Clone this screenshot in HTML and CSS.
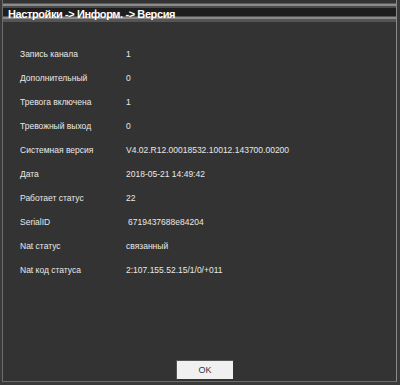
FILE: index.html
```html
<!DOCTYPE html>
<html>
<head>
<meta charset="utf-8">
<link rel="stylesheet" href="styles.css">
</head>
<body>
<div class="window">
  <div class="titlebar"><span class="title">Настройки -&gt; Информ. -&gt; Версия</span></div>
  <div class="content">
    <div class="rows">
      <div class="label">Запись канала</div><div class="value">1</div>
      <div class="label">Дополнительный</div><div class="value">0</div>
      <div class="label">Тревога включена</div><div class="value">1</div>
      <div class="label">Тревожный выход</div><div class="value">0</div>
      <div class="label">Системная версия</div><div class="value">V4.02.R12.00018532.10012.143700.00200</div>
      <div class="label">Дата</div><div class="value">2018-05-21 14:49:42</div>
      <div class="label">Работает статус</div><div class="value">22</div>
      <div class="label">SerialID</div><div class="value serial">6719437688e84204</div>
      <div class="label">Nat статус</div><div class="value">связанный</div>
      <div class="label">Nat код статуса</div><div class="value">2:107.155.52.15/1/0/+011</div>
    </div>
    <div class="footer"><button class="ok">OK</button></div>
  </div>
</div>
</body>
</html>
```
FILE: styles.css
```css
html, body {
  margin: 0;
  padding: 0;
  background: #3a3a3a;
  width: 400px;
  height: 385px;
  overflow: hidden;
}
.window {
  position: relative;
  width: 395px;
  height: 382px;
  box-sizing: border-box;
  margin-left: 2px;
  border-left: 1px solid #6c6c6c;
  border-right: 1px solid #8a8a8a;
  border-bottom: 1px solid #6c6c6c;
  background: #333333;
  display: flex;
  flex-direction: column;
}
.titlebar {
  margin-top: 3px;
  height: 19px;
  background: linear-gradient(to bottom,
    #5c5c5c 0px, #5c5c5c 1px,
    #8c8c8c 1px, #8c8c8c 3px,
    #4a4a4a 3px, #4a4a4a 5px,
    #1e1e1e 5px, #1e1e1e 13px,
    #555555 13px, #555555 14px,
    #8a8a8a 14px, #8a8a8a 16px,
    #555555 16px, #555555 19px);
  display: flex;
  align-items: center;
  padding-left: 5px;
}
.title {
  font-family: "Liberation Sans", sans-serif;
  font-weight: bold;
  font-size: 11px;
  letter-spacing: -0.4px;
  color: #ffffff;
  position: relative;
  top: 1px;
}
.content {
  flex: 1;
  display: flex;
  flex-direction: column;
  padding-left: 17px;
}
.rows {
  display: grid;
  grid-template-columns: 106px 1fr;
  grid-auto-rows: 24px;
  align-items: center;
  margin-top: 20px;
  font-family: "Liberation Sans", sans-serif;
  font-size: 8.5px;
  color: #e8e8e8;
}
.value.serial {
  padding-left: 2px;
}
.footer {
  margin-top: auto;
  display: flex;
  justify-content: center;
  padding-right: 6px;
  padding-bottom: 1px;
}
.ok {
  width: 58px;
  height: 20px;
  background: #f0f0f0;
  border: 1px solid #555;
  border-right-color: #333;
  border-bottom-color: #333;
  font-family: "Liberation Sans", sans-serif;
  font-size: 9px;
  color: #333344;
  padding: 0;
}
```
